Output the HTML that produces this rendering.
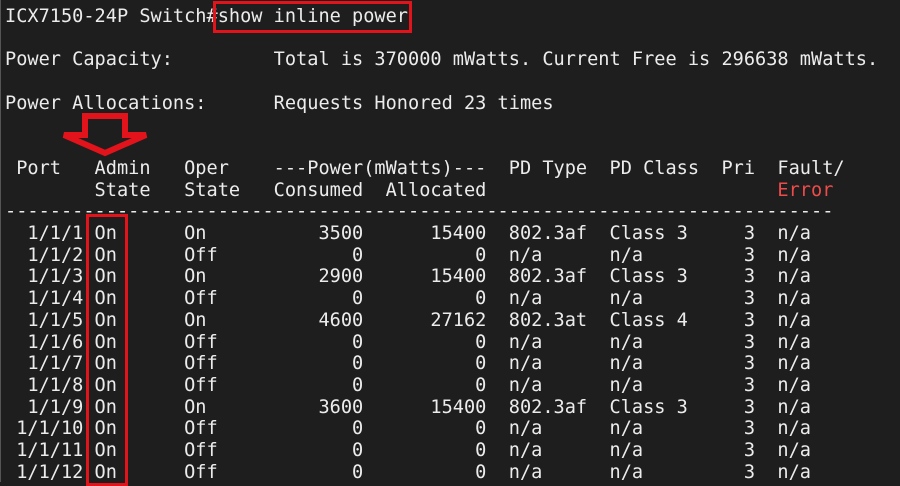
<!DOCTYPE html>
<html><head><style>
html,body{margin:0;padding:0;background:#1e1e1e;width:900px;height:482px;overflow:hidden}
pre{position:absolute;left:5px;top:6px;margin:0;font-family:"DejaVu Sans Mono","Liberation Mono",monospace;font-size:18.6px;line-height:21.7px;color:#ececec;font-weight:normal;letter-spacing:0}
.r{color:#ee4b4b}
.box{position:absolute;border:3px solid #e3131b;box-sizing:border-box}
</style></head><body>
<div style="position:absolute;left:0;top:0;width:1px;height:482px;background:#555"></div>
<pre>ICX7150-24P Switch#show inline power

Power Capacity:         Total is 370000 mWatts. Current Free is 296638 mWatts.

Power Allocations:      Requests Honored 23 times


 Port   Admin   Oper    ---Power(mWatts)---  PD Type  PD Class  Pri  Fault/
        State   State   Consumed  Allocated                          <span class="r">Error</span>
--------------------------------------------------------------------------
  1/1/1 On      On          3500      15400  802.3af  Class 3     3  n/a
  1/1/2 On      Off            0          0  n/a      n/a         3  n/a
  1/1/3 On      On          2900      15400  802.3af  Class 3     3  n/a
  1/1/4 On      Off            0          0  n/a      n/a         3  n/a
  1/1/5 On      On          4600      27162  802.3at  Class 4     3  n/a
  1/1/6 On      Off            0          0  n/a      n/a         3  n/a
  1/1/7 On      Off            0          0  n/a      n/a         3  n/a
  1/1/8 On      Off            0          0  n/a      n/a         3  n/a
  1/1/9 On      On          3600      15400  802.3af  Class 3     3  n/a
 1/1/10 On      Off            0          0  n/a      n/a         3  n/a
 1/1/11 On      Off            0          0  n/a      n/a         3  n/a
 1/1/12 On      Off            0          0  n/a      n/a         3  n/a</pre>
<div class="box" style="left:213px;top:1px;width:199px;height:32px"></div>
<div class="box" style="left:86px;top:214px;width:42px;height:272px"></div>
<svg style="position:absolute;left:0;top:0" width="900" height="482">
<polygon points="85,116 125,116 125,135 146,135 105,153 64,135 85,135" fill="none" stroke="#e3131b" stroke-width="6" stroke-linejoin="miter"/>
</svg>
</body></html>
